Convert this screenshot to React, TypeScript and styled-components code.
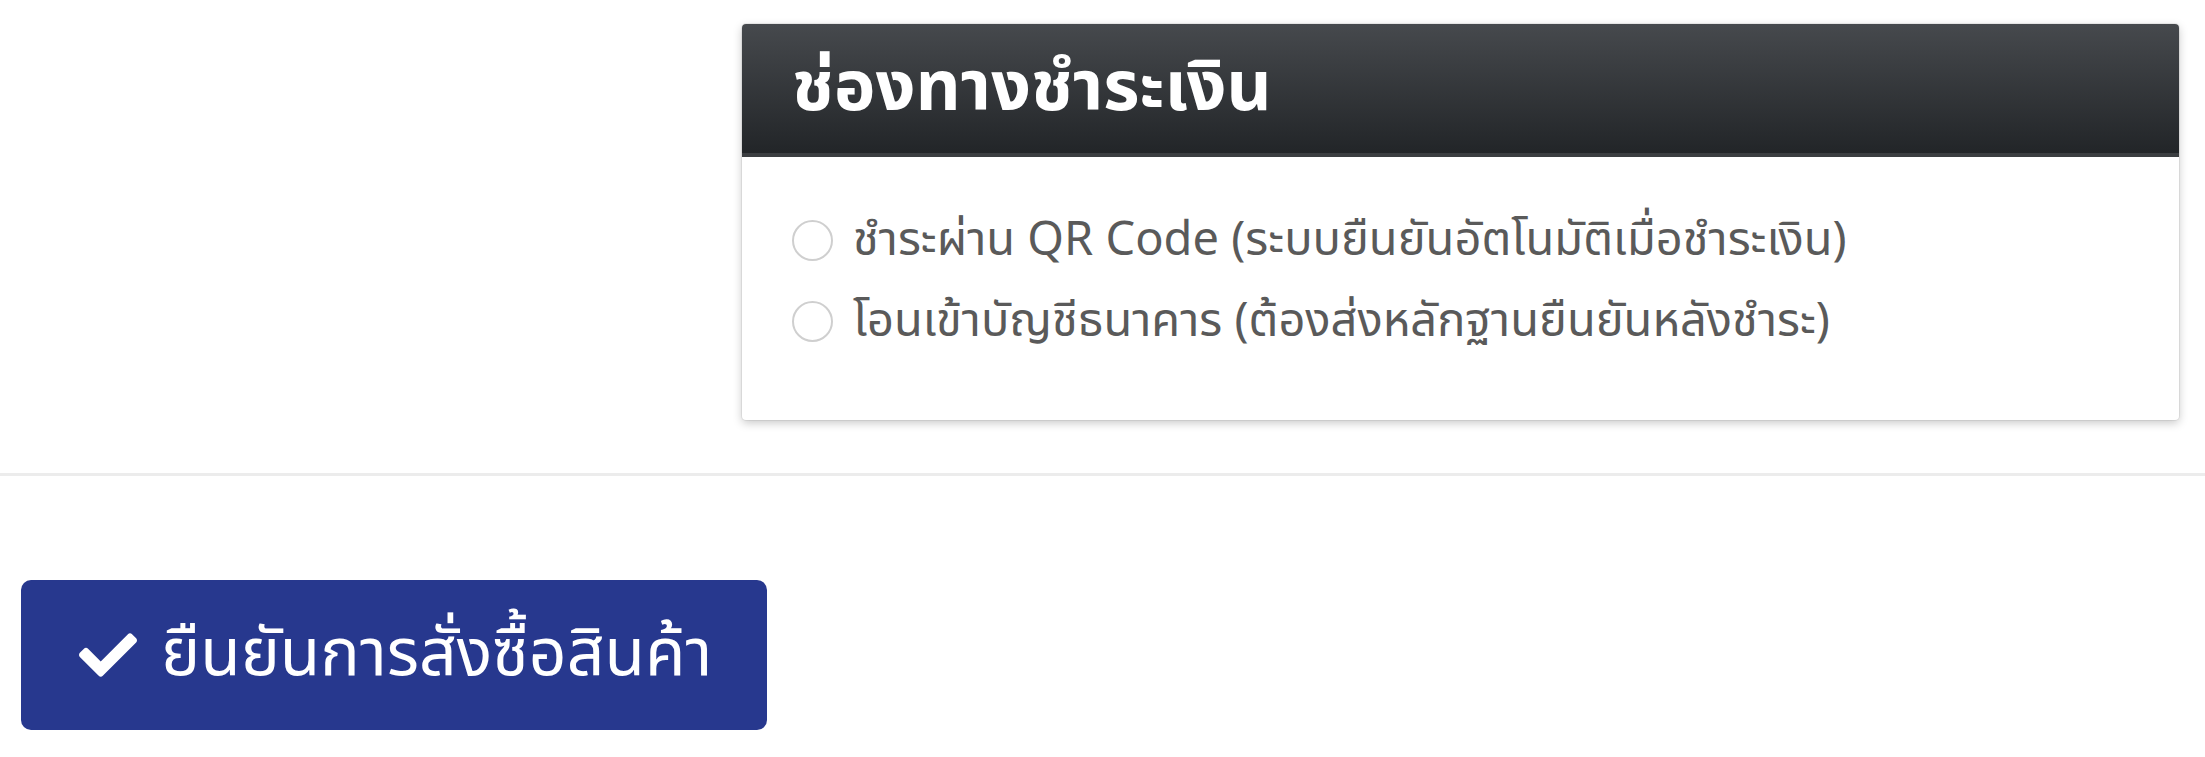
import { FC } from 'react'
import styled, { createGlobalStyle } from 'styled-components'
import { FaCheck } from 'react-icons/fa'

const Global = createGlobalStyle`
  html, body { margin: 0; padding: 0; background: #fff; }
  body { font-family: "Noto Sans Thai", "Noto Sans", "DejaVu Sans", sans-serif; }
`

const Page = styled.main`
  padding: 24px 26px 0 21px;
`

const TopRow = styled.section`
  display: flex;
  justify-content: flex-end;
`

const Card = styled.div`
  width: 1437px;
  height: 396px;
  background: #fff;
  border-radius: 4px;
  box-shadow: 0 3px 10px rgba(0, 0, 0, 0.22), 0 0 0 1px rgba(0, 0, 0, 0.06);
  overflow: hidden;
  display: flex;
  flex-direction: column;
`

const CardHeader = styled.div`
  height: 129px;
  background: linear-gradient(to bottom, #46494d, #222528);
  border-bottom: 4px solid #3b3e41;
  display: flex;
  align-items: center;
  padding-left: 50px;
  h2 {
    margin: 0;
    color: #fff;
    font-size: 70px;
    font-weight: 700;
    line-height: 1;
  }
`

const CardBody = styled.div`
  padding: 61px 0 0 50px;
  display: flex;
  flex-direction: column;
  gap: 36px;
`

const Option = styled.label`
  display: flex;
  align-items: center;
  gap: 20px;
  height: 45px;
  color: #5a5a5a;
  font-size: 47px;
  line-height: 1;
`

const Radio = styled.span`
  width: 37px;
  height: 37px;
  border-radius: 50%;
  border: 2px solid #cfcfcf;
  background: #fff;
  flex: none;
`

const Divider = styled.hr`
  margin: 53px -26px 0 -21px;
  border: 0;
  border-top: 3px solid #ececec;
`

const ConfirmButton = styled.button`
  margin-top: 104px;
  width: 746px;
  height: 150px;
  border: 0;
  border-radius: 10px;
  background: #27388e;
  color: #fff;
  font-family: inherit;
  font-size: 66px;
  display: flex;
  align-items: center;
  gap: 24px;
  padding: 0 0 0 58px;
  svg { width: 58px; height: 58px; flex: none; }
`

const App: FC = () => {
  return (
    <>
      <Global />
      <Page>
        <TopRow>
          <Card>
            <CardHeader>
              <h2>ช่องทางชำระเงิน</h2>
            </CardHeader>
            <CardBody>
              <Option>
                <Radio />
                ชำระผ่าน QR Code (ระบบยืนยันอัตโนมัติเมื่อชำระเงิน)
              </Option>
              <Option>
                <Radio />
                โอนเข้าบัญชีธนาคาร (ต้องส่งหลักฐานยืนยันหลังชำระ)
              </Option>
            </CardBody>
          </Card>
        </TopRow>
        <Divider />
        <ConfirmButton>
          <FaCheck />
          ยืนยันการสั่งซื้อสินค้า
        </ConfirmButton>
      </Page>
    </>
  )
}

export default App
